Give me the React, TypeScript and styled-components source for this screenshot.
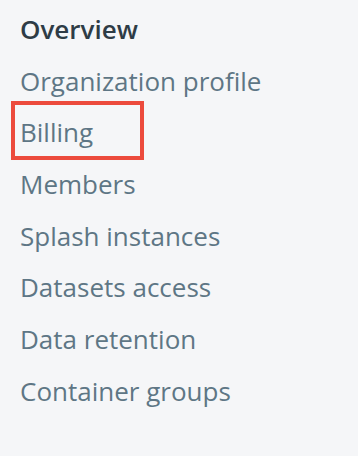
import React from 'react';
import styled, { createGlobalStyle } from 'styled-components';

const GlobalStyle = createGlobalStyle`
  html, body {
    margin: 0;
    padding: 0;
    background: #f5f6f8;
  }
`

const Nav = styled.nav`
  width: 358px;
  height: 456px;
  box-sizing: border-box;
  padding: 4px 0 0 20px;
  font-family: 'Open Sans', 'Noto Sans', sans-serif;
  background: #f5f6f8;
`

const NavList = styled.ul`
  list-style: none;
  margin: 0;
  padding: 0;
`

const NavItem = styled.li<{ $active?: boolean }>`
  position: relative;
  font-size: 26px;
  line-height: 51.7px;
  height: 51.7px;
  color: ${({ $active }) => ($active ? '#2e3c46' : '#5e7685')};
  font-weight: ${({ $active }) => ($active ? 600 : 400)};
  white-space: nowrap;
`

// red highlight box drawn around one entry
const Marker = styled.span`
  position: absolute;
  left: -9px;
  top: -6px;
  width: 133px;
  height: 59px;
  box-sizing: border-box;
  border: 4px solid #ec4b3d;
`

const items = [
  'Organization profile',
  'Billing',
  'Members',
  'Splash instances',
  'Datasets access',
  'Data retention',
  'Container groups',
]

const App: React.FC = () => {
  return (
    <>
      <GlobalStyle />
      <Nav>
        <NavList>
          <NavItem $active>Overview</NavItem>
          {items.map((label) => (
            <NavItem key={label}>
              {label}
              {label === 'Billing' && <Marker />}
            </NavItem>
          ))}
        </NavList>
      </Nav>
    </>
  )
}

export default App;
